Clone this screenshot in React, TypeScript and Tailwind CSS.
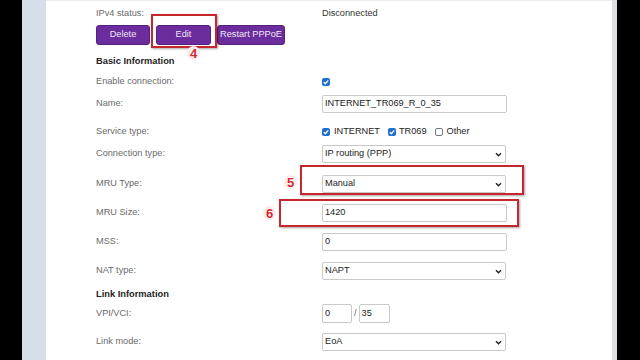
import React from "react";

function Chevron() {
  return (
    <svg viewBox="0 0 7 5" className="h-[5px] w-[7px]">
      <path d="M1 1.2l2.5 2.5L6 1.2" stroke="#222" strokeWidth="1.4" fill="none" />
    </svg>
  );
}

function Check({ on }: { on?: boolean }) {
  if (!on) return <span className="block h-[8px] w-[8px] rounded-[2px] border border-[#777] bg-white" />;
  return (
    <span className="flex h-[8px] w-[8px] items-center justify-center rounded-[2px] bg-[#1f6fd0]">
      <svg viewBox="0 0 8 8" className="h-[8px] w-[8px]">
        <path d="M1.7 4.1l1.6 1.6 3-3.3" stroke="white" strokeWidth="1.3" fill="none" />
      </svg>
    </span>
  );
}

function Field({ value, w = "w-[185px]" }: { value: string; w?: string }) {
  return (
    <div className={`flex h-full ${w} items-center rounded-[2px] border border-[#c9c9c9] bg-white px-[2px] text-[#222]`}>
      {value}
    </div>
  );
}

function Select({ value }: { value: string }) {
  return (
    <div className="flex h-full w-[184px] items-center justify-between rounded-[2px] border border-[#c9c9c9] bg-white pl-[2px] pr-[3px] text-[#222]">
      <span>{value}</span>
      <Chevron />
    </div>
  );
}

function Row({ label, mt, h = "h-[18px]", children }: { label: string; mt: string; h?: string; children?: React.ReactNode }) {
  return (
    <div className={`flex ${h} ${mt} items-center`}>
      <div className="w-[226px] text-[#6a6a6a]">{label}</div>
      <div className="flex h-full items-center">{children}</div>
    </div>
  );
}

function Heading({ text, mt }: { text: string; mt: string }) {
  return <div className={`flex h-[14px] ${mt} items-center font-bold text-[#222] text-[9.3px]`}>{text}</div>;
}

const btn = "flex h-[20px] items-center justify-center rounded-[3px] border border-[#55217d] bg-[#6b2d9e] text-[#eee6f4]";

function Mark({ n, className }: { n: string; className: string }) {
  return (
    <div
      className={`absolute flex h-[14px] w-[13px] items-center justify-center rounded-full bg-[#fbeceb] text-[13px] font-bold leading-none text-[#cf2b2f] [text-shadow:0_0_1px_#fff,0_0_2px_#fff] ${className}`}
    >
      {n}
    </div>
  );
}

export default function App() {
  return (
    <div className="relative flex h-[360px] w-[640px] overflow-hidden bg-black font-['Liberation_Sans',Arial,sans-serif] text-[9.2px] leading-none">
      <div className="w-[22px] bg-black" />
      <div className="w-[24px] bg-[#d7deea]" />
      <div className="flex-1 border-t border-[#ececec] bg-white pl-[50px] pt-[6px]">
        <Row label="IPv4 status:" mt="mt-0" h="h-[14px]">
          <span className="text-[#333]">Disconnected</span>
        </Row>
        <div className="mt-[4px] flex gap-[6px]">
          <div className={`${btn} w-[54px]`}>Delete</div>
          <div className={`${btn} w-[55px]`}>Edit</div>
          <div className={`${btn} w-[68px]`}>Restart PPPoE</div>
        </div>
        <Heading text="Basic Information" mt="mt-[10px]" />
        <Row label="Enable connection:" mt="mt-[6px]" h="h-[14px]">
          <Check on />
        </Row>
        <Row label="Name:" mt="mt-[6px]">
          <Field value="INTERNET_TR069_R_0_35" />
        </Row>
        <Row label="Service type:" mt="mt-[10px]">
          <div className="flex items-center text-[#222]">
            <Check on />
            <span className="ml-[4px]">INTERNET</span>
            <span className="ml-[8px]"><Check on /></span>
            <span className="ml-[3px]">TR069</span>
            <span className="ml-[8px]"><Check /></span>
            <span className="ml-[4px]">Other</span>
          </div>
        </Row>
        <Row label="Connection type:" mt="mt-[4px]">
          <Select value="IP routing (PPP)" />
        </Row>
        <Row label="MRU Type:" mt="mt-[12px]">
          <Select value="Manual" />
        </Row>
        <Row label="MRU Size:" mt="mt-[11px]">
          <Field value="1420" />
        </Row>
        <Row label="MSS:" mt="mt-[11px]">
          <Field value="0" />
        </Row>
        <Row label="NAT type:" mt="mt-[11px]">
          <Select value="NAPT" />
        </Row>
        <Heading text="Link Information" mt="mt-[8px]" />
        <Row label="VPI/VCI:" mt="mt-[2px]" h="h-[19px]">
          <Field value="0" w="w-[30px]" />
          <span className="mx-[2px] text-[#666]">/</span>
          <Field value="35" w="w-[31px]" />
        </Row>
        <Row label="Link mode:" mt="mt-[10px]">
          <Select value="EoA" />
        </Row>
      </div>
      <div className="w-[5px] bg-[#dedee3]" />
      <div className="w-[23px] bg-black" />

      <div className="absolute left-[151px] top-[14px] h-[34px] w-[66px] border-2 border-[#c6262d] shadow-[1px_1px_2px_rgba(0,0,0,0.35)]" />
      <Mark n="4" className="left-[187px] top-[46px]" />
      <div className="absolute left-[300px] top-[165px] h-[30px] w-[224px] border-2 border-[#c6262d] shadow-[1px_1px_2px_rgba(0,0,0,0.35)]" />
      <Mark n="5" className="left-[284px] top-[175px]" />
      <div className="absolute left-[279px] top-[199px] h-[28px] w-[240px] border-2 border-[#c6262d] shadow-[1px_1px_2px_rgba(0,0,0,0.35)]" />
      <Mark n="6" className="left-[263px] top-[206px]" />
    </div>
  );
}
